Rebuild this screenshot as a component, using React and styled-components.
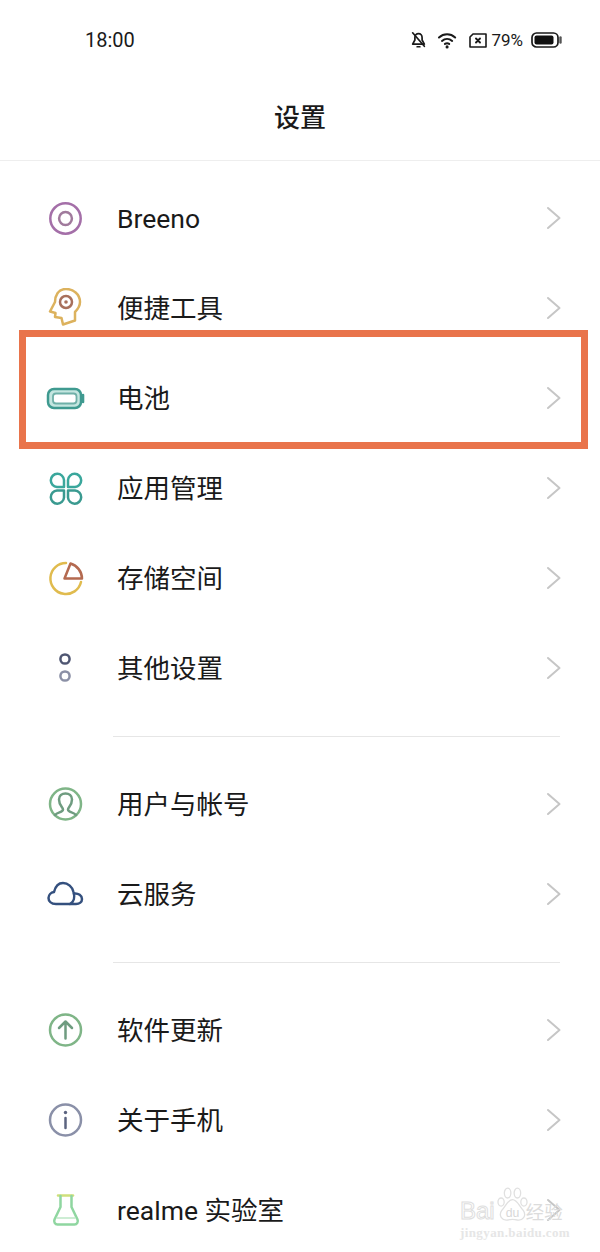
import React from "react";
import styled, { createGlobalStyle } from "styled-components";

const Global = createGlobalStyle`
  html, body {
    margin: 0;
    padding: 0;
    background: #fff;
  }
  body {
    font-family: "Roboto", "Noto Sans CJK SC", sans-serif;
    color: #1a1a1a;
  }
`;

const Screen = styled.div`
  position: relative;
  width: 600px;
  height: 1252px;
  overflow: hidden;
  background: #fff;
`;

const StatusBar = styled.div`
  height: 80px;
  box-sizing: border-box;
  padding: 26px 38px 0 85px;
  display: flex;
  justify-content: space-between;
  align-items: flex-start;
`;

const Clock = styled.div`
  font-size: 20px;
  line-height: 28px;
  color: #1a1a1a;
`;

const StatusIcons = styled.div`
  display: flex;
  align-items: center;
  height: 28px;
  gap: 11px;
`;

const Percent = styled.span`
  font-size: 17px;
  color: #1a1a1a;
  margin: 0 -3px 0 -7px;
`;

const Header = styled.div`
  height: 80px;
  border-bottom: 1px solid #eeeeee;
  display: flex;
  justify-content: center;
  align-items: flex-start;
  font-size: 26px;
  line-height: 77px;
  font-weight: 500;
  color: #1a1a1a;
`;

const Section = styled.div`
  display: flex;
  flex-direction: column;
`;

const FirstSection = styled(Section)`
  padding-top: 12px;
`;

const Divider = styled.div`
  height: 1px;
  margin: 23px 40px 22px 113px;
  background: #e6e6e6;
`;

const Row = styled.div`
  height: 90px;
  display: flex;
  align-items: center;
  padding: 0 38px 0 45px;
`;

const IconSlot = styled.div`
  width: 40px;
  height: 40px;
  margin-right: 32px;
  display: flex;
  align-items: center;
  justify-content: center;
`;

const Label = styled.div`
  flex: 1;
  font-size: 26.5px;
  line-height: 36px;
  padding-top: 2px;
  color: #1a1a1a;
`;

const Highlight = styled.div`
  position: absolute;
  left: 19px;
  top: 330px;
  width: 569px;
  height: 119px;
  box-sizing: border-box;
  border: 7px solid #e9744b;
`;

const Watermark = styled.div`
  position: absolute;
  left: 460px;
  top: 1187px;
  width: 120px;
  pointer-events: none;
`;

const MarkLine = styled.div`
  display: flex;
  align-items: baseline;
  font-family: "Liberation Sans", sans-serif;
  font-size: 24px;
  line-height: 28px;
  margin-top: 10px;
  color: #fff;
  -webkit-text-stroke: 1px #dedede;
`;

const MarkCjk = styled.span`
  font-family: "Noto Sans CJK SC", sans-serif;
  font-size: 18.5px;
  margin-left: 31px;
  color: #dcdcdc;
  -webkit-text-stroke: 0;
`;

const MarkDomain = styled.div`
  font-family: "Liberation Serif", serif;
  font-weight: 700;
  font-size: 13px;
  line-height: 14px;
  letter-spacing: 0.4px;
  margin-top: 1px;
  color: #e6e6e6;
`;

const Paw = styled.svg`
  position: absolute;
  left: 37px;
  top: 0;
`;

const Chevron = () => (
  <svg width="16" height="24" viewBox="0 0 16 24" fill="none">
    <path d="M2 2 L13.5 12 L2 22" stroke="#c6c6c6" strokeWidth="2" strokeLinecap="round" strokeLinejoin="round" />
  </svg>
);

const Ico = ({ children }) => (
  <svg width="40" height="40" viewBox="0 0 40 40" fill="none" strokeWidth="2.5" strokeLinecap="round" strokeLinejoin="round">
    {children}
  </svg>
);

const icons = {
  breeno: (
    <Ico>
      <circle cx="20.5" cy="20.5" r="15.2" stroke="#a46fa8" />
      <circle cx="20.5" cy="20.5" r="6.4" stroke="#a07a9c" />
    </Ico>
  ),
  tools: (
    <Ico>
      <path d="M21 1 C13 1 10 8 10 14 L5 23.5 L10.5 25 L10 29 L16.5 30 L18 36.5 L30 32.5 L30 24 C33 21 35 18 35 14 C35 6 28 1 21 1 Z" stroke="#dcb25e" />
      <circle cx="21" cy="14" r="6" stroke="#a8705c" />
      <circle cx="21" cy="14" r="1.8" fill="#a8705c" stroke="none" />
    </Ico>
  ),
  battery: (
    <Ico>
      <rect x="3" y="11" width="33" height="19" rx="6" fill="#c4e6e0" stroke="#3f9a90" />
      <rect x="8" y="15.5" width="23.5" height="10" rx="3" fill="#fff" stroke="#6fb0a8" strokeWidth="1.8" />
      <path d="M38 17 L38 24" stroke="#3f9a90" strokeWidth="2.6" />
    </Ico>
  ),
  apps: (
    <Ico>
      <path d="M19 19 L12 19 A6.6 6.6 0 1 1 19 12 Z" stroke="#3aa79c" />
      <path d="M23 19 L30 19 A6.6 6.6 0 1 0 23 12 Z" stroke="#3aa79c" />
      <path d="M19 22.5 L12 22.5 A6.6 6.6 0 1 0 19 29.5 Z" stroke="#3a9a90" />
      <path d="M23 22.5 L30 22.5 A6.6 6.6 0 1 1 23 29.5 Z" stroke="#3a9a90" />
    </Ico>
  ),
  storage: (
    <Ico>
      <path d="M21 5 A15.5 15.5 0 1 0 36 24" stroke="#e0bb4e" />
      <path d="M19.5 20.5 L25.5 5.5 A16 16 0 0 1 37 20.5 Z" stroke="#b46a50" />
    </Ico>
  ),
  other: (
    <Ico>
      <circle cx="20" cy="11" r="4.6" stroke="#4f5672" />
      <circle cx="20" cy="28" r="4.6" stroke="#8b90a6" />
    </Ico>
  ),
  user: (
    <Ico>
      <circle cx="20.5" cy="20" r="15.5" stroke="#7fb587" />
      <path d="M10 31 C12.5 28 18 28.5 18 25.5 C18 23 14 21.5 14 15.5 C14 11.5 17 9.5 20.5 9.5 C24 9.5 27 11.5 27 15.5 C27 21.5 23 23 23 25.5 C23 28.5 28.5 28 31 31" stroke="#6f9c80" />
    </Ico>
  ),
  cloud: (
    <Ico>
      <path d="M11 30 C6 30 3.5 27 3.5 24 C3.5 21 6 18.5 9 18 C10.5 12 14 9 18 9 C23 9 27.5 13 28.5 18 C30 23 29 28 25 30 Z" stroke="#34507e" />
      <path d="M29 19.5 C33.5 19 37 21.5 37 25 C37 28 34.5 30 31 30 L25 30" stroke="#34507e" />
    </Ico>
  ),
  update: (
    <Ico>
      <circle cx="20.5" cy="20" r="15.5" stroke="#7fb587" />
      <path d="M20.5 28.5 L20.5 12 M14 18 L20.5 11.5 L27 18" stroke="#6f9c80" />
    </Ico>
  ),
  about: (
    <Ico>
      <circle cx="20.5" cy="20" r="15.5" stroke="#8a90a8" />
      <circle cx="20.5" cy="12.5" r="1.7" fill="#5c6480" stroke="none" />
      <path d="M20.5 18 L20.5 28" stroke="#5c6480" />
    </Ico>
  ),
  lab: (
    <Ico>
      <path d="M13 5.5 L28 5.5" stroke="#cfe07a" />
      <path d="M15.5 6 L15.5 17 L9.5 29.5 C8.5 32 10 34.5 12.5 34.5 L29.5 34.5 C32 34.5 33.5 32 32.5 29.5 L26.5 17 L26.5 6" stroke="#8fd6a0" />
      <path d="M12 28 L30 28" stroke="#bde8c6" strokeWidth="1.6" />
    </Ico>
  ),
};

const sections = [
  [
    { icon: "breeno", label: "Breeno" },
    { icon: "tools", label: "便捷工具" },
    { icon: "battery", label: "电池" },
    { icon: "apps", label: "应用管理" },
    { icon: "storage", label: "存储空间" },
    { icon: "other", label: "其他设置" },
  ],
  [
    { icon: "user", label: "用户与帐号" },
    { icon: "cloud", label: "云服务" },
  ],
  [
    { icon: "update", label: "软件更新" },
    { icon: "about", label: "关于手机" },
    { icon: "lab", label: "realme 实验室" },
  ],
];

function Rows({ items }) {
  return items.map((e) => (
    <Row key={e.label}>
      <IconSlot>{icons[e.icon]}</IconSlot>
      <Label>{e.label}</Label>
      <Chevron />
    </Row>
  ));
}

export default function App() {
  return (
    <Screen>
      <Global />
      <StatusBar>
        <Clock>18:00</Clock>
        <StatusIcons>
          <svg width="15" height="18" viewBox="0 0 16 20" fill="none" stroke="#1a1a1a" strokeWidth="1.9" strokeLinecap="round" strokeLinejoin="round">
            <path d="M4 7 C4 4.5 5.8 3 8 3 C10.5 3 12 5 12 7.5 L12 10 L14.5 14.5 L1.5 14.5 L4 10 Z" />
            <path d="M1.5 2 L14.5 17" />
            <path d="M6.5 17.5 L9.5 17.5" />
          </svg>
          <svg width="21" height="17" viewBox="0 0 24 20" fill="none" stroke="#1a1a1a" strokeWidth="2.4" strokeLinecap="round">
            <path d="M2 6.5 C7.5 1.5 15.5 1.5 21 6.5" />
            <path d="M5.5 10.5 C9 7.5 14 7.5 17.5 10.5" />
            <path d="M9 14 C10.5 13 12.5 13 14 14" />
            <circle cx="11.5" cy="17.5" r="1.8" fill="#1a1a1a" stroke="none" />
          </svg>
          <svg width="18" height="15" viewBox="0 0 18 15" fill="none" stroke="#1a1a1a" strokeLinecap="round">
            <path d="M4 1 L17 1 L17 14 L1 14 L1 4 Z" strokeWidth="1.6" strokeLinejoin="round" />
            <path d="M7 5.5 L11 9.5 M11 5.5 L7 9.5" strokeWidth="1.9" />
          </svg>
          <Percent>79%</Percent>
          <svg width="31" height="16" viewBox="0 0 31 16" fill="none">
            <rect x="1" y="1" width="26" height="14" rx="4.5" stroke="#1a1a1a" strokeWidth="1.7" />
            <rect x="3.5" y="3.5" width="19" height="9" rx="2" fill="#111" />
            <path d="M29.5 5.5 L29.5 10.5" stroke="#555" strokeWidth="2.4" strokeLinecap="round" />
          </svg>
        </StatusIcons>
      </StatusBar>
      <Header>设置</Header>
      <FirstSection>
        <Rows items={sections[0]} />
      </FirstSection>
      <Divider />
      <Section>
        <Rows items={sections[1]} />
      </Section>
      <Divider />
      <Section>
        <Rows items={sections[2]} />
      </Section>
      <Highlight />
      <Watermark>
        <Paw width="31" height="35" viewBox="0 0 38 42" fill="#fff" stroke="#e0e0e0" strokeWidth="1.6">
          <ellipse cx="5" cy="18" rx="3.8" ry="5" />
          <ellipse cx="13" cy="7" rx="4" ry="6" />
          <ellipse cx="25" cy="7" rx="4" ry="6" />
          <ellipse cx="33" cy="18" rx="3.8" ry="5" />
          <path d="M19 15 C25 15 27 23 32 28 C37 35 31 41 25 40 C21 39 17 39 13 40 C7 41 1 35 6 28 C11 23 13 15 19 15 Z" />
          <text x="19" y="36" textAnchor="middle" fontFamily="Liberation Sans, sans-serif" fontSize="15" fill="#d8d8d8" stroke="none">du</text>
        </Paw>
        <MarkLine>
          Bai
          <MarkCjk>经验</MarkCjk>
        </MarkLine>
        <MarkDomain>jingyan.baidu.com</MarkDomain>
      </Watermark>
    </Screen>
  );
}
